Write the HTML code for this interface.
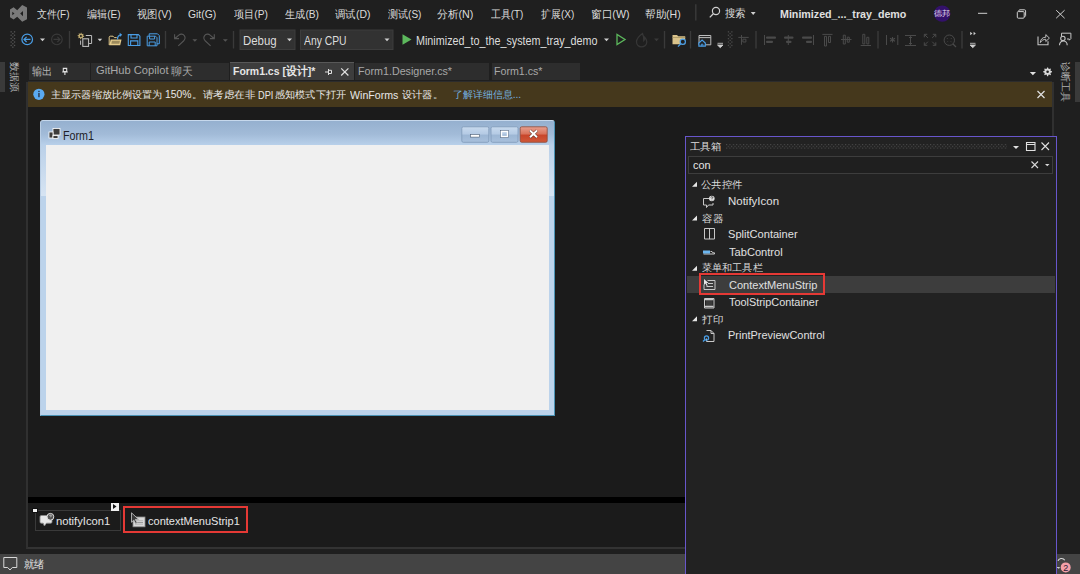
<!DOCTYPE html>
<html><head><meta charset="utf-8">
<style>
*{margin:0;padding:0;box-sizing:border-box}
html,body{width:1080px;height:574px;overflow:hidden;background:#1f1f1f;font-family:"Liberation Sans",sans-serif;color:#d6d6d6;font-size:11px}
.a{position:absolute;white-space:nowrap;line-height:16px}
.t{position:absolute;white-space:nowrap;line-height:16px;transform-origin:0 0}
.vt{position:absolute;white-space:nowrap;writing-mode:vertical-rl;text-orientation:sideways;font-size:10px;color:#b0b0b0;line-height:12px}
</style></head><body>

<!-- title/menu bar -->


<!-- title bar icons -->
<svg class="a" style="left:0;top:0" width="1080" height="56" viewBox="0 0 1080 56">
<path fill="#7a7a7a" fill-rule="evenodd" d="M10 9.6L13.6 7.3L17.2 10.2L22.2 4.9L27 7.4L27 19.2L22.2 21.8L17.2 16.8L13.6 19.4L10 17.2Z M12.3 11.8L14.5 13.5L12.3 15.3Z M23 11L20.2 13.6L23 16.2Z"/>
<line x1="695.8" y1="4.3" x2="695.8" y2="20.5" stroke="#3a3a3a" stroke-width="1.4"/>
<circle cx="716" cy="11" r="3.6" fill="none" stroke="#cfcfcf" stroke-width="1.2"/>
<line x1="713.3" y1="13.8" x2="709.8" y2="17.4" stroke="#cfcfcf" stroke-width="1.3"/>
<path d="M750.8 12h4.8l-2.4 2.9z" fill="#cfcfcf"/>
<circle cx="942.2" cy="13.6" r="8.2" fill="#33116a"/>
<line x1="978" y1="13.3" x2="987.2" y2="13.3" stroke="#d0d0d0" stroke-width="1"/>
<rect x="1017.3" y="11.6" width="6.9" height="6.6" rx="1" fill="none" stroke="#d0d0d0" stroke-width="1"/>
<path d="M1018.8 11.4v-0.6c0-0.6 0.4-1 1-1h4.8c0.6 0 1 0.4 1 1v4.8c0 0.6-0.4 1-1 1h-0.4" fill="none" stroke="#d0d0d0" stroke-width="1"/>
<path d="M1056.2 10.2l8.4 8 M1064.6 10.2l-8.4 8" stroke="#d0d0d0" stroke-width="1"/>
<!-- toolbar -->
<g fill="#555">
<rect x="10.5" y="31.2" width="1.3" height="1.3"/><rect x="13.9" y="31.2" width="1.3" height="1.3"/>
<rect x="12.2" y="32.9" width="1.3" height="1.3"/>
<rect x="10.5" y="34.6" width="1.3" height="1.3"/><rect x="13.9" y="34.6" width="1.3" height="1.3"/>
<rect x="12.2" y="36.3" width="1.3" height="1.3"/>
<rect x="10.5" y="38.0" width="1.3" height="1.3"/><rect x="13.9" y="38.0" width="1.3" height="1.3"/>
<rect x="12.2" y="39.7" width="1.3" height="1.3"/>
<rect x="10.5" y="41.4" width="1.3" height="1.3"/><rect x="13.9" y="41.4" width="1.3" height="1.3"/>
<rect x="12.2" y="43.1" width="1.3" height="1.3"/>
<rect x="10.5" y="44.8" width="1.3" height="1.3"/><rect x="13.9" y="44.8" width="1.3" height="1.3"/>
<rect x="12.2" y="46.5" width="1.3" height="1.3"/>
</g>
<circle cx="27.2" cy="39.4" r="5.3" fill="none" stroke="#4a9ee6" stroke-width="1.2"/>
<path d="M24 39.4h6.5 M26.6 36.8l-2.6 2.6l2.6 2.6" fill="none" stroke="#4a9ee6" stroke-width="1.2"/>
<path d="M40 38.6h5l-2.5 2.6z" fill="#d0d0d0"/>
<circle cx="56.9" cy="39.4" r="5.3" fill="none" stroke="#3a3a3a" stroke-width="1.1"/>
<path d="M53.5 39.4h6.5 M57.4 36.8l2.6 2.6l-2.6 2.6" fill="none" stroke="#3a3a3a" stroke-width="1.1"/>
<line x1="69.5" y1="31" x2="69.5" y2="48.5" stroke="#3a3a3a" stroke-width="1.4"/>
<path d="M80.90 32.70L81.54 32.76L81.78 33.88L82.18 34.09L83.23 33.67L83.64 34.17L83.02 35.12L83.16 35.55L84.20 36.00L84.14 36.64L83.02 36.88L82.81 37.28L83.23 38.33L82.73 38.74L81.78 38.12L81.35 38.26L80.90 39.30L80.26 39.24L80.02 38.12L79.62 37.91L78.57 38.33L78.16 37.83L78.78 36.88L78.64 36.45L77.60 36.00L77.66 35.36L78.78 35.12L78.99 34.72L78.57 33.67L79.07 33.26L80.02 33.88L80.45 33.74Z M81.90 36.00A1.0 1.0 0 1 0 79.90 36.00A1.0 1.0 0 1 0 81.90 36.00Z" fill="#bca86e" fill-rule="evenodd"/>
<path d="M85.8 35.5h5.8v8h-2.5" fill="none" stroke="#bdbdbd" stroke-width="1"/>
<rect x="82.8" y="38.8" width="5.8" height="7.6" fill="#2a2a2a" stroke="#c4c4c4" stroke-width="1"/>
<path d="M80.6 40.5v4.3" stroke="#bdbdbd" stroke-width="1"/>
<path d="M97.6 38.8h4.6l-2.3 2.4z" fill="#d0d0d0"/>
<path d="M109.2 45v-7.8c0-0.6 0.4-1 1-1h2.8l1.4 1.4h2.3" fill="none" stroke="#e2c98a" stroke-width="1"/>
<path d="M109.2 45.2h11l1.3-5.7h-10.8z" fill="#e2c98a"/>
<path d="M111.3 43.8h8l0.7-3h-8z" fill="#9c8a5c"/>
<path d="M117.5 39.5c0-2.8 1.2-4.4 3.5-4.6" fill="none" stroke="#4a9ee6" stroke-width="1.3"/>
<path d="M119.6 32.8l2.6 2l-2.3 2.2z" fill="#4a9ee6"/>
<path d="M128.3 34.6h10l1.6 1.6v9.3h-11.6z M131 34.6v3.4h6v-3.4 M130.6 45.5v-4.6h7.2v4.6" fill="none" stroke="#4a9ee6" stroke-width="1.1"/>
<path d="M147.2 36.2h8.3l1.5 1.5v8.1h-9.8z M149.6 36.2v2.8h5v-2.8 M149.2 45.8v-3.8h6v3.8 M149.2 36v-2.2h8.3l1.8 1.8v8.2h-2.3" fill="none" stroke="#4a9ee6" stroke-width="1"/>
<line x1="165.5" y1="31" x2="165.5" y2="48.5" stroke="#3a3a3a" stroke-width="1.4"/>
<path d="M174.6 34.2 V38.6 H179 M175 38.5 L178.5 35.3 C180.5 33.6 183 33.8 184.3 35.6 C185.5 37.3 185 39.5 183.5 41 L178.3 45.8" fill="none" stroke="#555" stroke-width="1.1"/>
<path d="M192.4 39.2h4.9l-2.45 2.6z" fill="#555"/>
<path d="M 214.30 34.20 V 38.60 H 209.90 M 213.90 38.50 L 210.40 35.30 C 208.40 33.60 205.90 33.80 204.60 35.60 C 203.40 37.30 203.90 39.50 205.40 41.00 L 210.60 45.80" fill="none" stroke="#555" stroke-width="1.1"/>
<path d="M222.9 39.2h4.9l-2.45 2.6z" fill="#555"/>
<line x1="233.5" y1="31" x2="233.5" y2="48.5" stroke="#3a3a3a" stroke-width="1.4"/>
<rect x="240" y="30" width="55" height="19.5" fill="#323232" stroke="#3d3d3d"/>
<path d="M287 38.6h5l-2.5 2.6z" fill="#d0d0d0"/>
<rect x="300.5" y="30" width="92.5" height="19.5" fill="#323232" stroke="#3d3d3d"/>
<path d="M384.5 38.6h5l-2.5 2.6z" fill="#d0d0d0"/>
<path d="M402.5 34.3v10.5l9-5.25z" fill="#5cb85c"/>
<path d="M604 38.6h5l-2.5 2.6z" fill="#d0d0d0"/>
<path d="M617 34.5v10l8-5z" fill="none" stroke="#5cb85c" stroke-width="1.3"/>
<path d="M642.5 33.5c-3.5 2.5-6 5-6 8.3c0 3 2.3 5 5 5c3 0 5.3-2 5.3-5c0-2-1-3.3-2-4.3c0.3 1.5-0.2 2.6-1 3.2c0.2-2.5-0.3-5-1.3-7.2z" fill="none" stroke="#363636" stroke-width="1.3"/>
<path d="M654 38.6h5l-2.5 2.6z" fill="#3a3a3a"/>
<line x1="664.5" y1="31" x2="664.5" y2="48.5" stroke="#3a3a3a" stroke-width="1.4"/>
<path d="M672.5 35h4.5l1.2 1.2h7v8h-12.7z" fill="#d9c28a"/>
<path d="M672.5 37.5h12.7" stroke="#a89460" stroke-width="0.8"/>
<circle cx="682.8" cy="41.8" r="2.6" fill="#1f1f1f" stroke="#4a9ee6" stroke-width="1.2"/>
<path d="M680.8 43.8l-2.8 2.8" stroke="#4a9ee6" stroke-width="1.3"/>
<line x1="690.5" y1="31" x2="690.5" y2="48.5" stroke="#3a3a3a" stroke-width="1.4"/>
<path d="M699 35.5h11.8v9.3h-11.8z" fill="#262626" stroke="#bdbdbd"/><path d="M699 37.6h11.8" stroke="#bdbdbd" stroke-width="1"/>
<path d="M698.9 43l3.2-2.9l3.2 2.9v3.2h-6.4z" fill="#1f1f1f" stroke="#4a9ee6" stroke-width="1.2"/><path d="M701.3 46.2v-2h1.6v2" stroke="#4a9ee6" stroke-width="0.9" fill="none"/>
<path d="M717.5 43.3h5.5 M717.5 45h5.5l-2.75 2.7z" fill="#cfcfcf" stroke="#cfcfcf" stroke-width="0.8"/>
<g fill="#4a4a4a">
<rect x="727.8" y="31.2" width="1.3" height="1.3"/><rect x="731.2" y="31.2" width="1.3" height="1.3"/>
<rect x="729.5" y="32.9" width="1.3" height="1.3"/>
<rect x="727.8" y="34.6" width="1.3" height="1.3"/><rect x="731.2" y="34.6" width="1.3" height="1.3"/>
<rect x="729.5" y="36.3" width="1.3" height="1.3"/>
<rect x="727.8" y="38.0" width="1.3" height="1.3"/><rect x="731.2" y="38.0" width="1.3" height="1.3"/>
<rect x="729.5" y="39.7" width="1.3" height="1.3"/>
<rect x="727.8" y="41.4" width="1.3" height="1.3"/><rect x="731.2" y="41.4" width="1.3" height="1.3"/>
<rect x="729.5" y="43.1" width="1.3" height="1.3"/>
<rect x="727.8" y="44.8" width="1.3" height="1.3"/><rect x="731.2" y="44.8" width="1.3" height="1.3"/>
<rect x="729.5" y="46.5" width="1.3" height="1.3"/>
</g>
<g fill="none" stroke="#4a4a4a" stroke-width="1">
<path d="M738.3 37.4h10.4 M741.5 35v9.8 M742.9 39.2h3v2.8h-3z"/>
<path d="M764.5 35v10 M788.3 35v10 M813.5 35v10"/>
<path d="M822.4 34.4h10.1 M824.5 36.3h2v9.7h-2z M828.5 36.3h2v6.2h-2z"/>
<path d="M841 39.5h10.5 M843.3 35.2h2v8.8h-2z M847.3 37.2h2v5h-2z"/>
<path d="M860.7 45.5h10.3 M862.8 34.3h2v9.6h-2z M866.8 37.3h2v6.6h-2z"/>
<path d="M886.5 35v10 M897.8 35v10"/>
<path d="M890 38.2l5 3 M895 38.2l-5 3 M892.5 37v5.5" stroke-width="1.1"/>
<path d="M905 35.5h11 M905 45.5h11 M910.5 36.5v8 M909 38l1.5-1.5l1.5 1.5 M909 43l1.5 1.5l1.5-1.5"/>
<path d="M924.3 34.3l3.6 3.6 M924.3 34.3h3 M924.3 34.3v3 M935.8 34.3l-3.6 3.6 M935.8 34.3h-3 M935.8 34.3v3 M924.3 45.3l3.6-3.6 M924.3 45.3h3 M924.3 45.3v-3 M935.8 45.3l-3.6-3.6 M935.8 45.3h-3 M935.8 45.3v-3"/>
<circle cx="949.3" cy="40.2" r="5.2"/><path d="M953 44l3 3" stroke-width="1.2"/>
<path d="M947 38.2l0.8 0.8 M951.6 38.2l-0.8 0.8 M947 42.2l0.8-0.8 M951.6 42.2l-0.8-0.8" stroke-width="0.9"/>
</g>
<g fill="#4a4a4a">
<rect x="766" y="36.6" width="10" height="2.1" rx="1"/><rect x="766" y="40.8" width="7" height="2.2" rx="1"/>
<rect x="784" y="36.6" width="9.5" height="2.1" rx="1"/><rect x="786" y="40.8" width="5.5" height="2.2" rx="1"/>
<rect x="802" y="36.6" width="10" height="2.1" rx="1"/><rect x="806" y="40.8" width="6" height="2.2" rx="1"/>
</g>
<g stroke="#3a3a3a" stroke-width="1.4">
<line x1="756" y1="31" x2="756" y2="48.5"/><line x1="878" y1="31" x2="878" y2="48.5"/><line x1="962" y1="31" x2="962" y2="48.5"/>
</g>
<path d="M970.2 31.8l2.2 1.7l-2.2 1.7z M973.6 31.8l2.2 1.7l-2.2 1.7z" fill="#cfcfcf"/>
<path d="M970 43.3h5.5 M970 45h5.5l-2.75 2.7z" fill="#cfcfcf" stroke="#cfcfcf" stroke-width="0.8"/>
<path d="M1038 36.5V44.7H1048V41.2" fill="none" stroke="#c4c4c4" stroke-width="1.1"/>
<path d="M1040.3 42.6C1040.5 39.2 1042.6 37.2 1045.8 37.2V34.6L1049.4 38.1L1045.8 41.5V39.3C1043.6 39.3 1041.6 40.3 1040.3 42.6Z" fill="none" stroke="#c4c4c4" stroke-width="0.95" stroke-linejoin="round"/>
<path d="M1061.5 36.5v-3.3h9.4v5.4l-1.6 1.6v-1.2h-2.3" fill="none" stroke="#c4c4c4" stroke-width="1"/>
<circle cx="1062.9" cy="38.4" r="2.2" fill="#1f1f1f" stroke="#c4c4c4" stroke-width="1.1"/>
<path d="M1059.5 45.2A3.85 4.2 0 0 1 1067.2 45.2" fill="none" stroke="#c4c4c4" stroke-width="1.1"/>
</svg>

<!-- tabs row -->
<div class="a" style="left:0;top:62px;width:5px;height:30px;background:#3a3a3a"></div>
<div class="a" style="left:1075px;top:62px;width:5px;height:40px;background:#3a3a3a"></div>
<div class="a" style="left:29px;top:63px;width:61px;height:17px;background:#2d2d2d"></div>
<div class="a" style="left:91px;top:63px;width:138px;height:17px;background:#2d2d2d"></div>
<div class="a" style="left:230px;top:62px;width:124px;height:18.4px;background:#3d3d3d;border-top:1.8px solid #585858"></div>
<div class="a" style="left:355px;top:63px;width:134px;height:17px;background:#2d2d2d"></div>
<div class="a" style="left:492px;top:63px;width:88px;height:17px;background:#2d2d2d"></div>
<svg class="a" style="left:0;top:56px" width="1080" height="52" viewBox="0 56 1080 52">
<path d="M63.3 68.4h3.4v3.2h-3.4z M62.2 72h5.6 M64.9 72.3v2.8" fill="none" stroke="#e0e0e0" stroke-width="1.1"/>
<path d="M325 72h3.5 M328.5 69v6 M328.5 70.3h3v3.2h-3" fill="none" stroke="#e0e0e0" stroke-width="1"/>
<path d="M341.2 68.3l7.2 7.2 M348.4 68.3l-7.2 7.2" stroke="#e0e0e0" stroke-width="1.2"/>
<path d="M1029.8 72h6.2l-3.1 3.2z" fill="#e0e0e0"/>
<path d="M1047.17 67.42L1048.03 67.42L1048.53 68.74L1049.11 68.98L1050.39 68.40L1051.00 69.01L1050.42 70.29L1050.66 70.87L1051.98 71.37L1051.98 72.23L1050.66 72.73L1050.42 73.31L1051.00 74.59L1050.39 75.20L1049.11 74.62L1048.53 74.86L1048.03 76.18L1047.17 76.18L1046.67 74.86L1046.09 74.62L1044.81 75.20L1044.20 74.59L1044.78 73.31L1044.54 72.73L1043.22 72.23L1043.22 71.37L1044.54 70.87L1044.78 70.29L1044.20 69.01L1044.81 68.40L1046.09 68.98L1046.67 68.74Z M1048.90 71.80A1.3 1.3 0 1 0 1046.30 71.80A1.3 1.3 0 1 0 1048.90 71.80Z" fill="#d8d8d8" fill-rule="evenodd"/>
<circle cx="38.9" cy="94.3" r="5.6" fill="#5aaaf0"/>
<rect x="38.2" y="93" width="1.5" height="4.2" fill="#2a3d55"/>
<rect x="38.2" y="90.8" width="1.5" height="1.3" fill="#2a3d55"/>
<path d="M1037.5 91l7 7 M1044.5 91l-7 7" stroke="#e0e0e0" stroke-width="1.2"/>
</svg>
<!-- info bar -->
<div class="a" style="left:28px;top:80.8px;width:1024.4px;height:1.2px;background:#2c2c2c"></div>
<div class="a" style="left:26px;top:82px;width:2px;height:25px;background:#303030"></div>
<div class="a" style="left:1052.4px;top:82px;width:1.6px;height:25px;background:#303030"></div>
<div class="a" style="left:28px;top:82px;width:1024.4px;height:24.8px;background:#45381c"></div>
<svg class="a" style="left:0;top:82px" width="1080" height="25" viewBox="0 82 1080 25">
<circle cx="38.9" cy="94.3" r="5.6" fill="#5aaaf0"/>
<rect x="38.2" y="93" width="1.5" height="4.2" fill="#2a3d55"/>
<rect x="38.2" y="90.8" width="1.5" height="1.3" fill="#2a3d55"/>
<path d="M1037.5 91l7 7 M1044.5 91l-7 7" stroke="#e0e0e0" stroke-width="1.2"/>
</svg>

<!-- status bar -->
<div class="a" style="left:0;top:554px;width:1080px;height:20px;background:#444"></div>
<svg class="a" style="left:0;top:550px" width="1080" height="24" viewBox="0 550 1080 24">
<path d="M3.8 557.5h13v10h-4.5l-2.3 2.5l-2.3-2.5h-3.9z" fill="none" stroke="#d8d8d8" stroke-width="1"/>
<path d="M1058 561c0.5-2.8 5-3.6 6.8-0.8" fill="none" stroke="#d8d8d8" stroke-width="1.1"/>
<path d="M1057 567.5h2.5l-1 1.3" fill="none" stroke="#c8c8c8" stroke-width="1"/>
<circle cx="1065.7" cy="567.4" r="5" fill="#f4a0a8"/>
<text x="1065.7" y="571" font-size="9" text-anchor="middle" fill="#2a1a3a" font-family="Liberation Sans">2</text>
</svg>
<!-- design surface -->
<div class="a" style="left:26px;top:106.8px;width:1028px;height:442.2px;background:#1b1b1b;border-left:2px solid #303030;border-right:2px solid #303030;border-bottom:2px solid #333"></div>
<div class="a" style="left:28px;top:497px;width:1024px;height:5.6px;background:#000"></div>

<!-- form -->
<div class="a" style="left:40px;top:120px;width:515px;height:296px;background:#bcd3eb;border-radius:3px 3px 0 0;border:1px solid #c6d8ec;border-left-color:#b8cde4;border-right-color:#4a92b4;border-bottom-color:#4a92b4"></div>
<div class="a" style="left:41px;top:121px;width:513px;height:24px;background:linear-gradient(#95b0cf,#a2bbd8 55%,#b8d0ea);border-radius:2px 2px 0 0"></div>
<div class="a" style="left:46px;top:144.5px;width:503px;height:265.5px;background:#f0f0f0"></div>
<div class="a" style="left:41px;top:145px;width:5px;height:51px;background:linear-gradient(#bad0e8,#d6e4f3)"></div>
<div class="a" style="left:549px;top:145px;width:5px;height:51px;background:linear-gradient(#bad0e8,#d6e4f3)"></div>
<svg class="a" style="left:40px;top:120px" width="515" height="30" viewBox="40 120 515 30">
<rect x="53" y="128.5" width="7" height="6.5" fill="#3c3c3c" stroke="#fff" stroke-width="0.8"/>
<rect x="49" y="132" width="4" height="6" fill="#3c3c3c" stroke="#fff" stroke-width="0.8"/>
<rect x="53" y="135.5" width="5" height="3" fill="#3c3c3c" stroke="#fff" stroke-width="0.8"/>
<defs>
<linearGradient id="gb" x1="0" y1="0" x2="0" y2="1"><stop offset="0" stop-color="#c8daee"/><stop offset="0.48" stop-color="#b4cae4"/><stop offset="0.52" stop-color="#9cb6d4"/><stop offset="1" stop-color="#a8c0dc"/></linearGradient>
<linearGradient id="gr" x1="0" y1="0" x2="0" y2="1"><stop offset="0" stop-color="#e8a090"/><stop offset="0.48" stop-color="#d87058"/><stop offset="0.52" stop-color="#c8442a"/><stop offset="1" stop-color="#d05838"/></linearGradient>
</defs>
<rect x="461.8" y="126.8" width="27" height="15.5" rx="1.5" fill="url(#gb)" stroke="#7e98b8" stroke-width="0.8"/>
<rect x="491" y="126.8" width="27" height="15.5" rx="1.5" fill="url(#gb)" stroke="#7e98b8" stroke-width="0.8"/>
<rect x="520.2" y="126.8" width="27" height="15.5" rx="1.5" fill="url(#gr)" stroke="#8a4a3a" stroke-width="0.8"/>
<rect x="470.5" y="134.5" width="9" height="2.6" fill="#fff" stroke="#4a5a70" stroke-width="0.6"/>
<rect x="500.5" y="130.5" width="8" height="7" fill="none" stroke="#4a5a70" stroke-width="0.6"/>
<rect x="501.5" y="131.5" width="6" height="5" fill="none" stroke="#fff" stroke-width="1.4"/>
<path d="M530 130.5l7 6.8 M537 130.5l-7 6.8" stroke="#5a2a20" stroke-width="3"/>
<path d="M530 130.5l7 6.8 M537 130.5l-7 6.8" stroke="#fff" stroke-width="2"/>
</svg>

<!-- toolbox -->
<div class="a" style="left:685px;top:136px;width:371.6px;height:440px;background:#222222;border:1.6px solid #6856cc"></div>
<svg class="a" style="left:726px;top:143.8px" width="281" height="5" viewBox="0 0 281 5"><defs><pattern id="dp" width="3.4" height="3.6" patternUnits="userSpaceOnUse"><rect x="0" y="0" width="1.1" height="1.1" fill="#4c4c4c"/><rect x="1.7" y="1.8" width="1.1" height="1.1" fill="#4c4c4c"/></pattern></defs><rect width="281" height="5" fill="url(#dp)"/></svg>
<div class="a" style="left:688px;top:156px;width:365px;height:18px;border:1px solid #3d3d3d;background:#1f1f1f"></div>
<div class="a" style="left:686.5px;top:276px;width:368px;height:16.6px;background:#3d3d3d"></div>
<div class="a" style="left:698.6px;top:272.6px;width:126px;height:22.8px;border:2px solid #e53935"></div>
<svg class="a" style="left:680px;top:136px" width="400" height="220" viewBox="680 136 400 220">
<path d="M1013 146h6l-3 3z" fill="#e0e0e0"/>
<path d="M1026.5 142.5h8.5v8h-8.5z M1026.5 144.5h8.5" fill="none" stroke="#e0e0e0" stroke-width="1.1"/>
<path d="M1041.5 142.5l7.5 7.5 M1049 142.5l-7.5 7.5" stroke="#e0e0e0" stroke-width="1.1"/>
<path d="M1031.5 161.5l6.5 6.5 M1038 161.5l-6.5 6.5" stroke="#d8d8d8" stroke-width="1.1"/>
<path d="M1045 164h4.5l-2.25 2.2z" fill="#d8d8d8"/>
<g fill="#e6e6e6">
<path d="M692 186.8h5v-5z"/>
<path d="M692 220.5h5v-5z"/>
<path d="M692 270.8h5v-5z"/>
<path d="M692 321.2h5v-5z"/>
</g>
<g fill="none" stroke="#c8c8c8" stroke-width="1">
<path d="M709 198.5h-5.5v6.5h3v2.5l2-2.5h4.5v-2"/>
<path d="M704.5 228.5h10v10.5h-10z M709.5 228.5v10.5"/>
<path d="M710.5 251.5h1.5l0.8 1.3h1.7v1.2h-11"/>
<path d="M707.5 280.5h7.5v9h-11v-5 M708 283.5h5 M706.5 286.5h6.5"/>
<path d="M704.5 298.5h9.5v9.5h-9.5z"/>
<path d="M706.5 330.5h4.5l3 3v8h-7.5v-3 M711 330.5v3h3"/>
</g>
<circle cx="711.8" cy="198.5" r="2.8" fill="#e0e0e0"/>
<path d="M710.8 197.4c0.2-0.9 2-0.9 2 0c0 0.6-0.9 0.7-0.9 1.4 M711.9 199.8v0.6" stroke="#222" stroke-width="0.8" fill="none"/>
<rect x="703" y="250.5" width="7" height="3" fill="#6cb6f0"/>
<path d="M704 279v6l1.5-1.5l1.2 2.5l1-0.5l-1.2-2.5h2z" fill="#e6e6e6"/>
<rect x="706" y="299.8" width="6.5" height="6.4" fill="#3a3a3a"/><path d="M705 299.5h8.5 M705 306.5h8.5" stroke="#c8c8c8" stroke-width="1.4"/>
<circle cx="706.5" cy="338" r="2.1" fill="none" stroke="#4a9ee6" stroke-width="1.2"/>
<path d="M705 339.5l-2 2" stroke="#4a9ee6" stroke-width="1.4"/>
</svg>

<!-- tray -->
<div class="a" style="left:34.5px;top:509.5px;width:86px;height:21px;border:1px solid #3a3a3a"></div>
<div class="a" style="left:32.4px;top:507.6px;width:5.4px;height:5px;background:#f4f4f4;border:0.7px solid #111"></div>
<div class="a" style="left:110.5px;top:502.5px;width:8px;height:8px;background:#f0f0f0"></div>
<div class="a" style="left:122.9px;top:505.8px;width:124.8px;height:27.2px;border:2px solid #e53935"></div>
<svg class="a" style="left:30px;top:500px" width="230" height="40" viewBox="30 500 230 40">
<path d="M113 504l3.5 2.5l-3.5 2.5z" fill="#111"/>
<path d="M41.5 515.5h8.5c1.5 0 2 0.6 2 1.6v4.6c0 1-0.6 1.5-1.6 1.5h-4l-2 2.8l-1.2-2.8h-1.6c-1 0-1.6-0.5-1.6-1.5v-4.6c0-1 0.5-1.6 1.5-1.6z" fill="#e8e8e8" stroke="#8a8a8a" stroke-width="0.9"/>
<circle cx="50.4" cy="516.8" r="3.4" fill="#555" stroke="#e0e0e0" stroke-width="1"/>
<path d="M49.4 515.8c0.2-0.9 2-0.9 2 0c0 0.6-0.9 0.7-0.9 1.4" stroke="#e0e0e0" stroke-width="0.8" fill="none"/>
<rect x="133" y="517" width="12" height="9.8" fill="#d8d8d8" stroke="#8a8a8a" stroke-width="0.8"/>
<rect x="135" y="520.6" width="8" height="3.8" fill="#9a9a9a"/>
<path d="M135 521.5h8 M135 523.6h8" stroke="#e8e8e8" stroke-width="0.7"/>
<path d="M131.5 512.8v9.5l2.3-2.2l1.8 3.4l1.5-0.8l-1.8-3.3h3.3z" fill="#3a3a3a" stroke="#b8b8b8" stroke-width="0.9"/>
</svg>


<!-- texts -->
<div class="t" style="left:36.80px;top:6.00px;font-size:11px;color:#dcdcdc;transform:scaleX(0.9000)">文件(F)</div>
<div class="t" style="left:87.00px;top:6.00px;font-size:11px;color:#dcdcdc;transform:scaleX(0.9167)">编辑(E)</div>
<div class="t" style="left:137.00px;top:6.00px;font-size:11px;color:#dcdcdc;transform:scaleX(0.9444)">视图(V)</div>
<div class="t" style="left:188.30px;top:6.00px;font-size:11px;color:#dcdcdc;transform:scaleX(0.9400)">Git(G)</div>
<div class="t" style="left:233.70px;top:6.00px;font-size:11px;color:#dcdcdc;transform:scaleX(0.9250)">项目(P)</div>
<div class="t" style="left:284.60px;top:6.00px;font-size:11px;color:#dcdcdc;transform:scaleX(0.9278)">生成(B)</div>
<div class="t" style="left:334.60px;top:6.00px;font-size:11px;color:#dcdcdc;transform:scaleX(0.9514)">调试(D)</div>
<div class="t" style="left:387.50px;top:6.00px;font-size:11px;color:#dcdcdc;transform:scaleX(0.9111)">测试(S)</div>
<div class="t" style="left:436.92px;top:6.00px;font-size:11px;color:#dcdcdc;transform:scaleX(0.9750)">分析(N)</div>
<div class="t" style="left:490.70px;top:6.00px;font-size:11px;color:#dcdcdc;transform:scaleX(0.8972)">工具(T)</div>
<div class="t" style="left:541.40px;top:6.00px;font-size:11px;color:#dcdcdc;transform:scaleX(0.9056)">扩展(X)</div>
<div class="t" style="left:590.83px;top:6.00px;font-size:11px;color:#dcdcdc;transform:scaleX(0.9711)">窗口(W)</div>
<div class="t" style="left:645.34px;top:6.00px;font-size:11px;color:#dcdcdc;transform:scaleX(0.9583)">帮助(H)</div>
<div class="t" style="left:725.30px;top:5.20px;font-size:11px;color:#dcdcdc;transform:scaleX(0.9500)">搜索</div>
<div class="t" style="left:779.63px;top:5.80px;font-size:11px;color:#e0e0e0;font-weight:bold;transform:scaleX(0.9705)">Minimized_..._tray_demo</div>
<div class="t" style="left:934.20px;top:6.20px;font-size:8px;color:#e4daf2;transform:scaleX(1.0000)">德邦</div>
<div class="t" style="left:242.85px;top:32.50px;font-size:12px;color:#dcdcdc;transform:scaleX(0.9529)">Debug</div>
<div class="t" style="left:303.80px;top:32.50px;font-size:12px;color:#dcdcdc;transform:scaleX(0.8612)">Any CPU</div>
<div class="t" style="left:416.10px;top:32.50px;font-size:12px;color:#dcdcdc;transform:scaleX(0.8980)">Minimized_to_the_system_tray_demo</div>
<div class="t" style="left:32.10px;top:62.80px;font-size:10.5px;color:#b4b4b4;transform:scaleX(0.9286)">输出</div>
<div class="t" style="left:95.60px;top:62.00px;font-size:11.5px;color:#a8a8a8;transform:scaleX(0.9693)">GitHub Copilot</div>
<div class="t" style="left:171.30px;top:62.90px;font-size:10.5px;color:#a8a8a8;transform:scaleX(0.9810)">聊天</div>
<div class="t" style="left:233.09px;top:63.00px;font-size:11.5px;color:#e6e6e6;font-weight:bold;transform:scaleX(0.9089)">Form1.cs [设计]*</div>
<div class="t" style="left:357.87px;top:62.50px;font-size:11.5px;color:#a8a8a8;transform:scaleX(0.9310)">Form1.Designer.cs*</div>
<div class="t" style="left:494.47px;top:62.50px;font-size:11.5px;color:#a8a8a8;transform:scaleX(0.9255)">Form1.cs*</div>
<div class="t" style="left:51.10px;top:87.00px;font-size:10.3px;color:#e8e8e8;transform:scaleX(1.0128)">主显示器缩放比例设置为</div>
<div class="t" style="left:165.38px;top:86.40px;font-size:11.2px;color:#e8e8e8;transform:scaleX(0.9250)">150%</div>
<div class="t" style="left:192.35px;top:87.00px;font-size:10.3px;color:#e8e8e8;transform:scaleX(1.0542)">。请考虑在非</div>
<div class="t" style="left:257.88px;top:86.50px;font-size:11.2px;color:#e8e8e8;transform:scaleX(0.8235)">DPI</div>
<div class="t" style="left:275.09px;top:87.00px;font-size:10.3px;color:#e8e8e8;transform:scaleX(1.0130)">感知模式下打开</div>
<div class="t" style="left:350.20px;top:86.60px;font-size:11.2px;color:#e8e8e8;transform:scaleX(0.9490)">WinForms</div>
<div class="t" style="left:401.90px;top:87.00px;font-size:10.3px;color:#e8e8e8;transform:scaleX(1.0242)">设计器。</div>
<div class="t" style="left:452.91px;top:87.00px;font-size:10.3px;color:#74b0e0;transform:scaleX(0.9940)">了解详细信息...</div>
<div class="t" style="left:62.61px;top:128.00px;font-size:12px;color:#1e1e28;transform:scaleX(0.8939)">Form1</div>
<div class="t" style="left:689.60px;top:139.00px;font-size:10.3px;color:#e0e0e0;transform:scaleX(1.0483)">工具箱</div>
<div class="t" style="left:693.00px;top:157.30px;font-size:11.5px;color:#e6e6e6;transform:scaleX(0.9444)">con</div>
<div class="t" style="left:700.66px;top:176.80px;font-size:10.3px;color:#dadada;transform:scaleX(1.0436)">公共控件</div>
<div class="t" style="left:728.40px;top:192.80px;font-size:11.5px;color:#e0e0e0;transform:scaleX(0.9980)">NotifyIcon</div>
<div class="t" style="left:701.70px;top:210.70px;font-size:10.3px;color:#dadada;transform:scaleX(1.0526)">容器</div>
<div class="t" style="left:728.44px;top:225.80px;font-size:11.5px;color:#e0e0e0;transform:scaleX(0.9634)">SplitContainer</div>
<div class="t" style="left:729.40px;top:243.50px;font-size:11.5px;color:#e0e0e0;transform:scaleX(0.9655)">TabControl</div>
<div class="t" style="left:701.70px;top:260.40px;font-size:10.3px;color:#dadada;transform:scaleX(1.0117)">菜单和工具栏</div>
<div class="t" style="left:729.40px;top:276.80px;font-size:11.5px;color:#e0e0e0;transform:scaleX(0.9598)">ContextMenuStrip</div>
<div class="t" style="left:729.40px;top:294.30px;font-size:11.5px;color:#e0e0e0;transform:scaleX(0.9463)">ToolStripContainer</div>
<div class="t" style="left:701.70px;top:311.90px;font-size:10.3px;color:#dadada;transform:scaleX(1.0526)">打印</div>
<div class="t" style="left:728.45px;top:327.00px;font-size:11.5px;color:#e0e0e0;transform:scaleX(0.9520)">PrintPreviewControl</div>
<div class="t" style="left:56.32px;top:513.00px;font-size:11.5px;color:#e6e6e6;transform:scaleX(0.9759)">notifyIcon1</div>
<div class="t" style="left:148.10px;top:513.00px;font-size:11.5px;color:#e6e6e6;transform:scaleX(0.9573)">contextMenuStrip1</div>
<div class="t" style="left:23.60px;top:556.10px;font-size:10.5px;color:#e0e0e0;transform:scaleX(0.9381)">就绪</div>
<div class="vt" style="left:8px;top:62px">数据源</div>
<div class="vt" style="left:1059px;top:62px">诊断工具</div>

</body></html>
